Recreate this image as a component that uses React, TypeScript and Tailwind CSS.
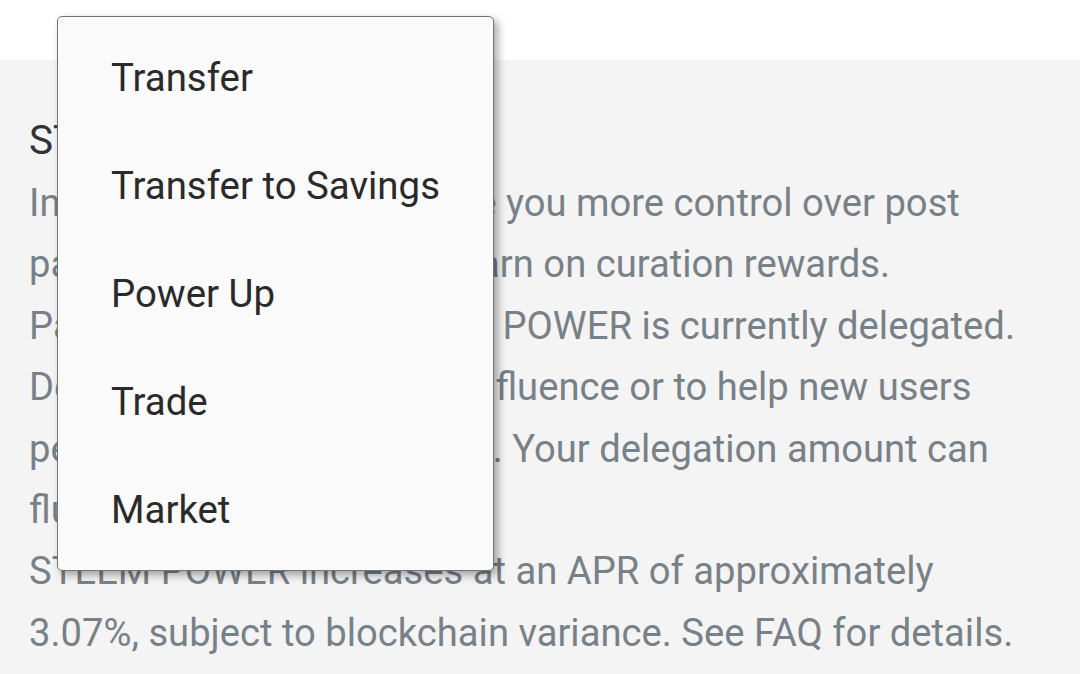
import React from "react";

const lines = [
  "Influence tokens which give you more control over post",
  "payouts and allow you to earn on curation rewards.",
  "Part of this author's STEEM POWER is currently delegated.",
  "Delegation is donated for influence or to help new users",
  "perform actions on Steemit. Your delegation amount can",
  "fluctuate.",
  "STEEM POWER increases at an APR of approximately",
  "3.07%, subject to blockchain variance. See FAQ for details.",
];

const items = ["Transfer", "Transfer to Savings", "Power Up", "Trade", "Market"];

export default function App() {
  return (
    <div
      className="relative w-[1080px] h-[674px] overflow-hidden bg-[#f4f4f4]"
      style={{ fontFamily: "Roboto, 'Noto Sans', sans-serif" }}
    >
      <div className="h-[60px] bg-white" />
      <div className="pl-[29px] pt-[50px]">
        <div className="text-[40.5px] leading-[61px] text-[#333333] whitespace-nowrap">STEEM POWER</div>
        <div className="mt-[2px] text-[38.2px] leading-[61.4px] text-[#788187]">
          {lines.map((l) => (
            <div key={l} className="whitespace-nowrap">{l}</div>
          ))}
        </div>
      </div>

      <div className="absolute left-[57px] top-[16px] w-[437px] h-[555px] rounded-[5px] border border-[#70757a] bg-[#fafafa] shadow-[4px_4px_9px_rgba(0,0,0,0.35)] pt-[7px]">
        {items.map((it) => (
          <div
            key={it}
            className="h-[108px] flex items-center pl-[53px] text-[38.4px] text-[#2a2a2a] whitespace-nowrap"
          >
            {it}
          </div>
        ))}
      </div>
    </div>
  );
}
